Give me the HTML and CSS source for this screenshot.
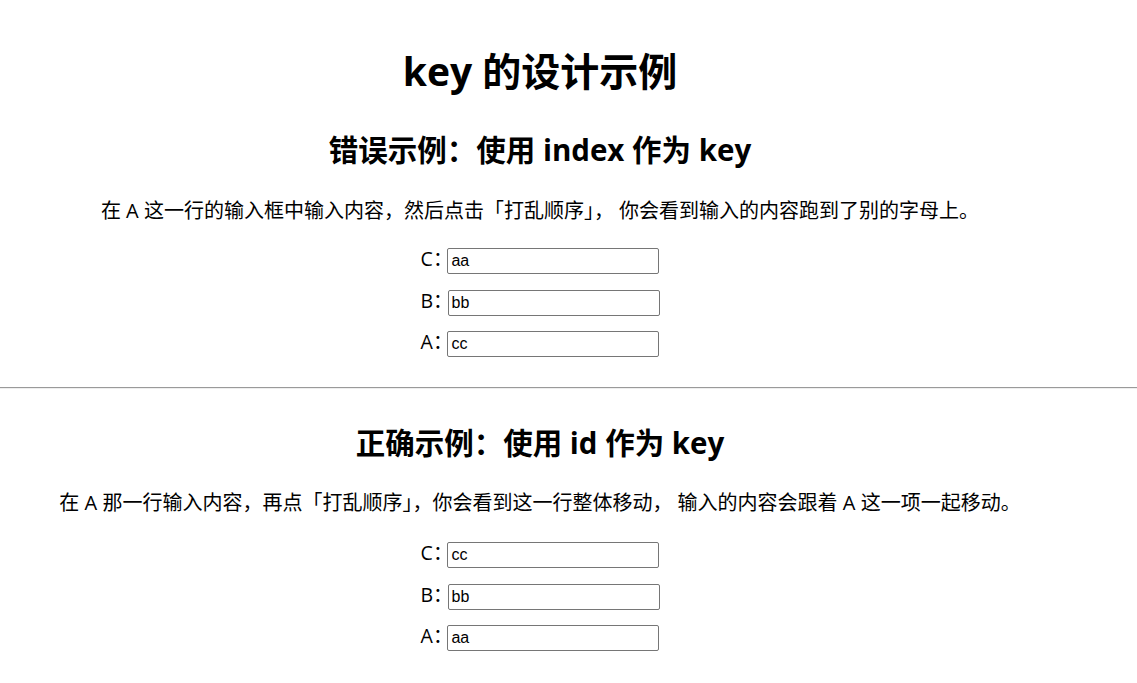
FILE: index.html
```html
<!DOCTYPE html>
<html lang="zh-CN">
<head>
<meta charset="utf-8">
<title>key 的设计示例</title>
<link rel="stylesheet" href="styles.css">
</head>
<body>
<div class="page">
  <h1 class="title">key 的设计示例</h1>
  <section class="demo demo-first">
    <h2 class="demo-title">错误示例：使用 index 作为 key</h2>
    <p class="demo-desc">在 A 这一行的输入框中输入内容，然后点击「打乱顺序」， 你会看到输入的内容跑到了别的字母上。</p>
    <ul class="rows">
      <li class="row"><span class="row-label">C：</span><input class="row-input" type="text" value="aa"></li>
      <li class="row"><span class="row-label">B：</span><input class="row-input" type="text" value="bb"></li>
      <li class="row"><span class="row-label">A：</span><input class="row-input" type="text" value="cc"></li>
    </ul>
  </section>
</div>
<hr class="divider">
<div class="page">
  <section class="demo demo-second">
    <h2 class="demo-title">正确示例：使用 id 作为 key</h2>
    <p class="demo-desc">在 A 那一行输入内容，再点「打乱顺序」，你会看到这一行整体移动， 输入的内容会跟着 A 这一项一起移动。</p>
    <ul class="rows">
      <li class="row"><span class="row-label">C：</span><input class="row-input" type="text" value="cc"></li>
      <li class="row"><span class="row-label">B：</span><input class="row-input" type="text" value="bb"></li>
      <li class="row"><span class="row-label">A：</span><input class="row-input" type="text" value="aa"></li>
    </ul>
  </section>
</div>
</body>
</html>
```
FILE: styles.css
```css
html, body {
  margin: 0;
  padding: 0;
  background: #fff;
  color: #000;
}
body {
  font-family: "Open Sans", "Noto Sans CJK SC", sans-serif;
}
.page {
  width: 1080px;
  text-align: center;
}
.title {
  margin: 0;
  padding-top: 47px;
  font-size: 39px;
  line-height: 48px;
  font-weight: 700;
}
.demo-first {
  padding-top: 35px;
  padding-bottom: 30px;
}
.demo-second {
  padding-top: 34px;
}
.demo-title {
  margin: 0;
  font-size: 29.5px;
  line-height: 40px;
  font-weight: 700;
}
.demo-desc {
  margin: 27px 0 0;
  font-size: 20px;
  line-height: 28px;
}
.demo-second .demo-desc {
  margin-top: 26px;
}
.rows {
  list-style: none;
  margin: 23px 0 0;
  padding: 0;
  display: flex;
  flex-direction: column;
  align-items: center;
  gap: 15.5px;
}
.demo-second .rows {
  margin-top: 25px;
}
.row {
  display: flex;
  align-items: center;
}
.row-label {
  font-size: 19.5px;
  line-height: 26px;
  margin-right: -5px;
  position: relative;
  top: -2px;
}
.row-input {
  box-sizing: border-box;
  width: 212px;
  height: 26px;
  margin: 0;
  padding: 0 3px;
  border: 1px solid #767676;
  border-radius: 2px;
  font-family: "Liberation Sans", Arial, sans-serif;
  font-size: 16px;
  color: #000;
  background: #fff;
}
.divider {
  margin: 0;
  border: 0;
  border-top: 1px solid #9a9a9a;
  border-bottom: 1px solid #eeeeee;
  height: 0;
}
```
